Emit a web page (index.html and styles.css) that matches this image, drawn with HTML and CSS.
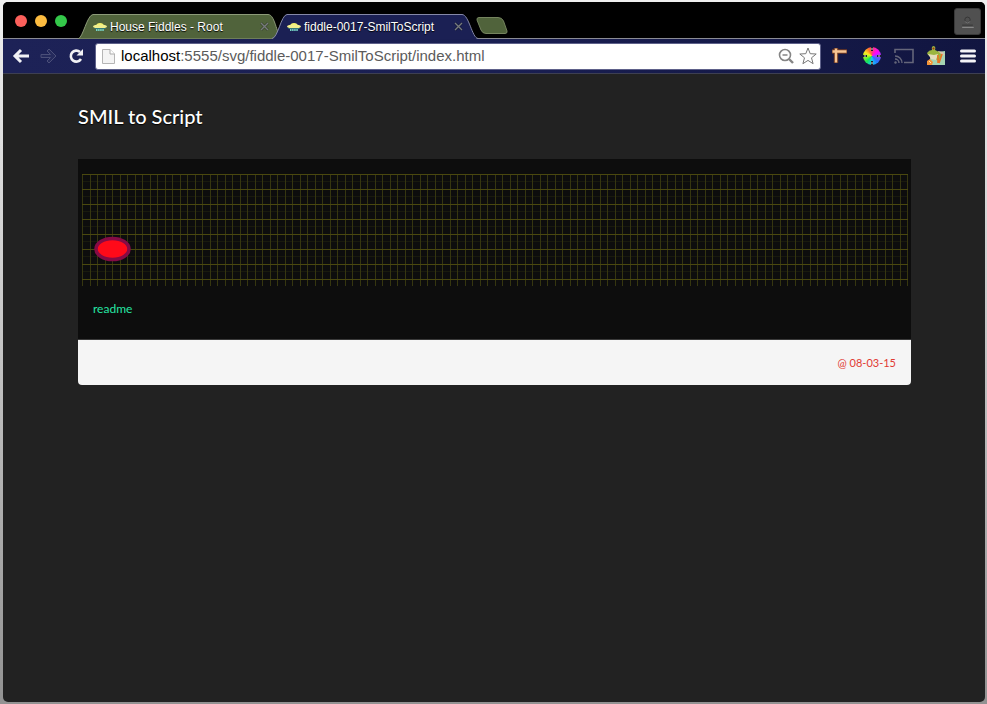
FILE: index.html
```html
<!DOCTYPE html>
<html lang="en">
<head>
<meta charset="utf-8">
<title>SMIL to Script</title>
<link rel="stylesheet" href="styles.css">
</head>
<body>
<svg class="defs" aria-hidden="true">
  <defs>
    <symbol id="saucer" viewBox="0 0 14 10">
      <path d="M3 4Q3.500 1 7 1Q10.500 1 11 4Z" fill="#f6f36a"/>
      <ellipse cx="7" cy="4.500" rx="7" ry="2" fill="#f2ef8d"/>
      <path d="M1.500 6.500h11" stroke="#347a78" stroke-width="1"/>
      <path d="M3 8h8" stroke="#76d3c5" stroke-width="1.800" stroke-dasharray="1.500 .6"/>
    </symbol>
    <symbol id="cross" viewBox="0 0 9 9">
      <path d="M1 1l7 7M8 1l-7 7" stroke="#000" stroke-opacity=".3" stroke-width="2.600"/>
      <path d="M1 1l7 7M8 1l-7 7" stroke="#777b7d" stroke-width="1.400"/>
    </symbol>
  </defs>
</svg>
<div class="window">
  <header class="titlebar">
    <div class="lights">
      <button class="light close" aria-label="Close window"></button>
      <button class="light minimise" aria-label="Minimise window"></button>
      <button class="light maximise" aria-label="Maximise window"></button>
    </div>
    <nav class="tabs" aria-label="Tabs">
      <div class="tab">
        <svg class="tab-shape" viewBox="0 0 206 25" preserveAspectRatio="none"><path d="M0 25C5 24 9 1 15 .5H190C198 .5 198 24 206 25Z" fill="#50633b" stroke="#8c9a78"/></svg>
        <svg class="favicon"><use href="#saucer"/></svg>
        <a class="tab-title" href="#root">House Fiddles - Root</a>
        <button class="tab-close" aria-label="Close House Fiddles"><svg><use href="#cross"/></svg></button>
      </div>
      <div class="tab active">
        <svg class="tab-shape" viewBox="0 0 206 25" preserveAspectRatio="none"><path d="M0 25C6 24 9 1 15 .5H190C197 .5 200 24 206 25Z" fill="#1b2054"/><path d="M0 24.500C6 24 9 1 15 .5H190C197 .5 200 24 206 24.500" fill="none" stroke="#8588a8"/></svg>
        <svg class="favicon"><use href="#saucer"/></svg>
        <a class="tab-title" href="#page">fiddle-0017-SmilToScript</a>
        <button class="tab-close" aria-label="Close fiddle"><svg><use href="#cross"/></svg></button>
      </div>
      <button class="new-tab" aria-label="New tab"><svg viewBox="0 0 32 17"><path d="M3 .5H22Q26 .5 27.500 4L31 14Q31.500 16.500 29 16.500H10Q6.500 16.500 5 13L1 3Q.5 .5 3 .5Z" fill="#50633b" stroke="#75845f"/></svg></button>
    </nav>
    <button class="profile" aria-label="Profile"><svg viewBox="0 0 28 27"><circle cx="14" cy="11" r="3" fill="none" stroke="#343434"/><path d="M11 13Q14 16 17 13" fill="none" stroke="#777"/><path d="M8 17h12" stroke="#343434"/><path d="M8 19.500h13" stroke="#999"/></svg></button>
  </header>
  <div class="toolbar">
    <button class="tool" aria-label="Back"><svg viewBox="0 0 18 16"><path d="M9 2L3 8l6 6M3 8h14" fill="none" stroke="#f1f1f5" stroke-width="3"/></svg></button>
    <button class="tool" aria-label="Forward"><svg viewBox="0 0 18 16"><path d="M9 1l7 7-7 7-2-2 3.500-3.500H1v-3h9.500L7 3Z" fill="#252a5c" stroke="#4b4f79"/></svg></button>
    <button class="tool reload" aria-label="Reload"><svg viewBox="0 0 16 16"><path d="M13 11A5.500 5.500 0 1 1 12 4" fill="none" stroke="#f1f1f5" stroke-width="2.600"/><path d="M15 1v6.500H8.500Z" fill="#f1f1f5"/></svg></button>
    <div class="address">
      <svg class="page-icon" viewBox="0 0 13 15"><path d="M.5 .5H8L12.500 5V14.500H.5Z" fill="#f4f4f4" stroke="#b5b5b5"/><path d="M8 .5V5H12.500" fill="#fff" stroke="#aaa"/></svg>
      <a class="url" href="#page"><span class="host">localhost</span>:5555/svg/fiddle-0017-SmilToScript/index.html</a>
      <button class="in-address" aria-label="Zoom"><svg viewBox="0 0 16 16"><circle cx="7" cy="7" r="5.500" fill="none" stroke="#858585" stroke-width="1.600"/><path d="M4.500 7h5" stroke="#858585" stroke-width="1.600"/><path d="M11 11l4 4" stroke="#858585" stroke-width="2.400"/></svg></button>
      <button class="in-address star" aria-label="Bookmark"><svg viewBox="0 0 18 18"><path d="M9 1l2.200 5.700 6 .3-4.700 3.800 1.600 5.900L9 13.400l-5.100 3.300 1.600-5.900L.8 7l6-.3Z" fill="#fff" stroke="#777"/></svg></button>
    </div>
    <div class="extensions">
      <button class="ext" aria-label="Ruler"><svg viewBox="0 0 20 20"><path d="M6 2v15M2 5.500h15" stroke="#713a22" stroke-width="4.400"/><path d="M6 2.500v14M2.500 5.500h14" stroke="#f7c594" stroke-width="2.400"/></svg></button>
      <button class="ext" aria-label="Colour picker"><span class="wheel"><svg viewBox="0 0 18 18"><path d="M9 0v4M9 14v4M0 9h4M14 9h4" stroke="#222" stroke-width="2"/><path d="M9 1v2M9 15v2M1 9h2M15 9h2" stroke="#ddd"/></svg></span></button>
      <button class="ext" aria-label="Cast"><svg viewBox="0 0 20 20"><path d="M1 7V3.500H19V16.500H10" fill="none" stroke="#65667a" stroke-width="1.600"/><path d="M1 10a7 7 0 0 1 7 7M1 13a4 4 0 0 1 4 4" fill="none" stroke="#65667a" stroke-width="1.400"/><circle cx="1.500" cy="16.500" r="1.200" fill="#65667a"/></svg></button>
      <button class="ext" aria-label="Frog"><svg viewBox="0 0 20 20"><path d="M5 7L19 5V19H3Z" fill="#a5d4b2"/><path d="M12 5l5 1 2 3-6 1Z" fill="#d5c6ae"/><path d="M1 7Q3 4 6 4Q5 0 8 0Q10 1 9 4L13 6L16 9L13 15L7 12L2 9Z" fill="#9bb53f"/><path d="M2 8L8 9 12 8 10 14 5 13Z" fill="#e4ddbb"/><circle cx="7.500" cy="2.500" r="1" fill="#a82b12"/><path d="M12 9v8M16 8l-3 9" stroke="#e87324" stroke-width="1.600"/><path d="M1 15l3-2 3 3-1 3H1Z" fill="#f59538"/><path d="M3 15l2 2" stroke="#ffe5ad"/></svg></button>
      <button class="ext" aria-label="Menu"><svg viewBox="0 0 20 20"><path d="M3.500 5h13M3.500 10h13M3.500 15h13" stroke="#f4f4f7" stroke-width="3" stroke-linecap="round"/></svg></button>
    </div>
  </div>
  <main class="page">
    <h1>SMIL to Script</h1>
    <article class="card">
      <svg class="canvas" role="img" aria-label="Red ellipse on a grid">
        <defs><pattern id="grid" width="15" height="15" patternUnits="userSpaceOnUse">
          <path d="M0 7.500H15" stroke="#191a0d"/>
          <path d="M.5 0V15" stroke="#363610"/>
          <path d="M8.500 0V15" stroke="#363610"/>
          <path d="M0 .5H15" stroke="#4a480f"/>
        </pattern></defs>
        <rect width="100%" height="100%" fill="url(#grid)"/>
        <ellipse cx="30.500" cy="75" rx="16.500" ry="10.500" fill="#ff0a19" stroke="#850b45" stroke-width="3.600"/>
      </svg>
      <div class="card-body"><a href="#readme">readme</a></div>
      <footer class="card-footer"><a href="#date">@ 08-03-15</a></footer>
    </article>
  </main>
</div>
</body>
</html>
```

FILE: styles.css
```css
* { box-sizing: border-box; }
body {
  margin: 0;
  min-height: 100vh;
  display: flex;
  padding: 2px 2px 2px 3px;
  background: linear-gradient(#f0f0f0, #c4c4c4 50%, #929292);
  font-family: "Liberation Sans", Arial, sans-serif;
}
a { text-decoration: none; color: inherit; }
button { padding: 0; border: 0; background: none; display: flex; align-items: center; justify-content: center; }
svg { display: block; }
.defs { position: absolute; width: 0; height: 0; }
.window {
  flex: 1;
  min-width: 0;
  display: flex;
  flex-direction: column;
  overflow: hidden;
  border-radius: 5px;
  background: #222;
}
.titlebar {
  display: flex;
  align-items: flex-end;
  height: 37px;
  border-bottom: 1px solid #8a8b94;
  background: #000;
}
.lights { display: flex; gap: 8px; padding: 2px 0 0 12px; width: 75px; align-self: center; }
.light { width: 12px; height: 12px; border-radius: 50%; }
.close { background: #fc605b; }
.minimise { background: #fdbc40; }
.maximise { background: #34c84a; }
.tabs { flex: 1; display: flex; align-items: flex-end; min-width: 0; }
.tab {
  position: relative;
  display: flex;
  align-items: center;
  gap: 3px;
  width: 206px;
  height: 25px;
  margin-right: -12px;
  margin-bottom: -1px;
  padding: 0 15px;
  color: #fff;
  font-size: 12px;
  text-shadow: 0 1px 1px #000;
}
.tab.active { z-index: 1; }
.tab-shape { position: absolute; inset: 0; width: 100%; height: 100%; }
.favicon { position: relative; width: 14px; height: 10px; }
.tab-title { position: relative; flex: 1; white-space: nowrap; }
.tab-close { position: relative; }
.tab-close svg { width: 9px; height: 9px; }
.new-tab { margin: 0 0 4px 10px; }
.new-tab svg { width: 32px; height: 17px; }
.profile {
  width: 27px;
  height: 27px;
  margin: 0 4px 3px;
  border: 1px solid #393939;
  border-radius: 3px;
  background: #505050;
}
.profile svg { width: 27px; height: 26px; }
.toolbar {
  display: flex;
  align-items: center;
  height: 35px;
  padding: 0 7px 0 9px;
  border-bottom: 1px solid #3d3f52;
  background: linear-gradient(90deg, #1d2257, #1a1f52 50%, #111540);
}
.tool { width: 28px; justify-content: flex-start; }
.tool svg { width: 18px; height: 16px; }
.tool.reload { width: 27px; }
.tool.reload svg { width: 16px; }
.address {
  flex: 1;
  min-width: 0;
  display: flex;
  align-items: center;
  height: 27px;
  padding: 0 3px 0 6px;
  border: 1px solid #5e618a;
  border-radius: 3px;
  background: #fff;
  color: #5b5b5b;
  font-size: 15px;
  line-height: 16px;
}
.page-icon { width: 13px; height: 15px; margin-right: 6px; }
.url { flex: 1; white-space: nowrap; }
.host { color: #000; }
.in-address svg { width: 16px; height: 16px; }
.star { margin-left: 5px; }
.star svg { width: 18px; height: 18px; }
.extensions { display: flex; gap: 12px; padding-left: 9px; }
.ext, .ext svg { width: 20px; height: 20px; }
.wheel {
  width: 18px;
  height: 18px;
  border-radius: 50%;
  background: conic-gradient(#ff3b78, #f0f 15%, #9346ff 25%, #2476ff 38%, #18c8f6 50%, #16e456 62%, #b5f91c 75%, #ffe624 83%, #ff7b24 92%, #ff3b78);
}
.ext .wheel svg { width: 18px; height: 18px; }
.page { padding: 30px 74px 30px 75px; font-family: Lato, sans-serif; }
h1 {
  margin: 0 0 31px;
  color: #fff;
  font-size: 20px;
  font-weight: 500;
  line-height: 24px;
  text-shadow: 0 1px 1px #000;
}
.card {
  overflow: hidden;
  border-radius: 0 0 4px 4px;
  background: #0d0d0d;
  font-size: 12px;
  line-height: 16px;
}
.canvas { width: calc(100% - 7px); height: 127px; margin-left: 4px; padding-top: 15px; }
.card-body { padding: 15px 15px 22px; color: #26e6a4; }
.card-footer {
  padding: 15px 15px 14px;
  border-top: 1px solid #3a3a3a;
  background: #f5f5f5;
  color: #e13a32;
  font-size: 11px;
  text-align: right;
}
```
